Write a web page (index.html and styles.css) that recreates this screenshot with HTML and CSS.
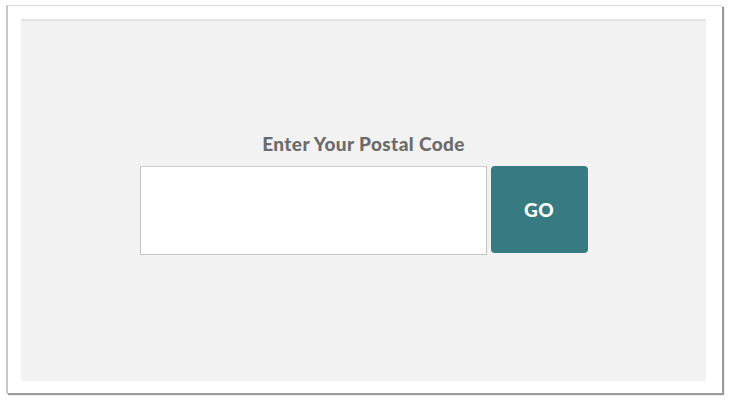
FILE: index.html
```html
<!DOCTYPE html>
<html>
<head>
<meta charset="utf-8">
<link rel="stylesheet" href="styles.css">
</head>
<body>
<div class="frame">
  <div class="panel">
    <h1 class="title">Enter Your Postal Code</h1>
    <form class="row">
      <input class="postal" type="text" aria-label="Postal code">
      <button class="go" type="button">GO</button>
    </form>
  </div>
</div>
</body>
</html>
```

FILE: styles.css
```css
html, body {
  margin: 0;
  padding: 0;
  background: #ffffff;
}
body {
  width: 730px;
  height: 404px;
  overflow: hidden;
  font-family: "Lato", "Liberation Sans", sans-serif;
}
.frame {
  box-sizing: border-box;
  margin: 5px 0 0 6px;
  width: 716px;
  height: 388px;
  background: #ffffff;
  border-top: 1px solid #dcdcdc;
  border-left: 2px solid #c8c8c8;
  box-shadow: 2px 2px 1px #9a9a9a, 1px 1px 0 #bdbdbd;
  padding: 13px 16px 11px 13px;
}
.panel {
  box-sizing: border-box;
  height: 362px;
  background: #f2f2f2;
  border-top: 2px solid #e4e4e4;
  display: flex;
  flex-direction: column;
  align-items: center;
  padding-top: 112px;
}
.title {
  margin: 0 0 11px 0;
  font-size: 19px;
  font-weight: 900;
  color: #6b6b6b;
  line-height: 22px;
  letter-spacing: 0.4px;
}
.row {
  display: flex;
  gap: 4px;
  margin: 0;
}
.postal {
  box-sizing: border-box;
  width: 347px;
  height: 89px;
  margin: 0;
  border: 1px solid #c4c4c4;
  border-top-color: #cfcfcf;
  background: #ffffff;
  padding: 0 8px;
  outline: none;
}
.go {
  box-sizing: border-box;
  width: 97px;
  height: 87px;
  margin: 0;
  border: none;
  border-radius: 4px;
  background: #367b81;
  color: #ffffff;
  font-family: "Lato", "Liberation Sans", sans-serif;
  font-weight: 900;
  font-size: 19px;
  letter-spacing: 0.5px;
  cursor: pointer;
}
```
